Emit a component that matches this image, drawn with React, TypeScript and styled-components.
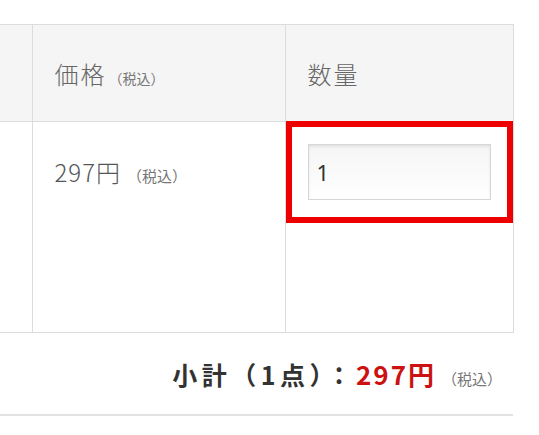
import React, { useState } from 'react';
import styled, { createGlobalStyle } from 'styled-components';

const GlobalStyle = createGlobalStyle`
    html, body {
        margin: 0;
        padding: 0;
        background: #fff;
    }
    body {
        font-family: "Noto Sans CJK JP", "Noto Sans", sans-serif;
        color: #555;
    }
`;

const Page = styled.div`
    width: 513px;
    padding-top: 24px;
`;

const Table = styled.table`
    width: 513px;
    border-collapse: collapse;
    table-layout: fixed;
`;

const HeadCell = styled.th<{ $edge?: boolean }>`
    box-sizing: border-box;
    height: 97px;
    padding: 0 22px;
    background: #f5f5f5;
    border: 1px solid #dcdcdc;
    border-left: ${(p) => (p.$edge ? 'none' : '1px solid #dcdcdc')};
    text-align: left;
    font-weight: 300;
    font-size: 24px;
    letter-spacing: 2px;
    color: #666;
    vertical-align: middle;
    white-space: nowrap;
`;

const Cell = styled.td<{ $edge?: boolean }>`
    position: relative;
    box-sizing: border-box;
    height: 211px;
    padding: 22px 22px;
    border: 1px solid #dcdcdc;
    border-left: ${(p) => (p.$edge ? 'none' : '1px solid #dcdcdc')};
    vertical-align: top;
`;

const Tax = styled.span<{ $size?: number }>`
    font-size: ${(p) => p.$size ?? 14}px;
    font-weight: 400;
    letter-spacing: 0;
    color: #777;
    margin-left: ${(p) => (p.$size ? 6 : 2)}px;
`;

const Price = styled.div`
    height: 56px;
    line-height: 56px;
    font-size: 24px;
    font-weight: 300;
    letter-spacing: 1px;
    color: #555;
`;

const QtyInput = styled.input`
    box-sizing: border-box;
    display: block;
    width: 183px;
    height: 56px;
    padding: 0 8px;
    border: 1px solid #d6d6d6;
    background: linear-gradient(#f5f5f5, #ffffff);
    box-shadow: inset 0 2px 3px rgba(0, 0, 0, 0.08);
    font-family: "Noto Sans", "Noto Sans CJK JP", sans-serif;
    font-size: 22px;
    color: #333;
    outline: none;
`;

const Highlight = styled.div`
    position: absolute;
    top: -1px;
    left: 0;
    width: 227px;
    height: 102px;
    box-sizing: border-box;
    border: 6px solid #ee0000;
    pointer-events: none;
`;

const Summary = styled.div`
    display: flex;
    align-items: baseline;
    justify-content: flex-end;
    height: 83px;
    padding: 22px 11px 0 0;
    box-sizing: border-box;
    border-bottom: 2px solid #e2e2e2;
`;

const SumLabel = styled.span`
    font-size: 25px;
    font-weight: 700;
    letter-spacing: 4.5px;
    color: #333;
`;

const SumPrice = styled.span`
    font-size: 26px;
    font-weight: 700;
    letter-spacing: 2px;
    color: #cc1111;
`;

function App() {
    const [qty, setQty] = useState('1');
    return (
        <>
            <GlobalStyle />
            <Page>
                <Table>
                    <colgroup>
                        <col style={{ width: 32 }} />
                        <col style={{ width: 253 }} />
                        <col style={{ width: 228 }} />
                    </colgroup>
                    <thead>
                        <tr>
                            <HeadCell $edge />
                            <HeadCell>
                                価格<Tax>（税込）</Tax>
                            </HeadCell>
                            <HeadCell>数量</HeadCell>
                        </tr>
                    </thead>
                    <tbody>
                        <tr>
                            <Cell $edge />
                            <Cell>
                                <Price>
                                    297円<Tax $size={15}>（税込）</Tax>
                                </Price>
                            </Cell>
                            <Cell>
                                <QtyInput value={qty} onChange={(e) => setQty(e.target.value)} />
                                <Highlight />
                            </Cell>
                        </tr>
                    </tbody>
                </Table>
                <Summary>
                    <SumLabel>小計（1点）：</SumLabel>
                    <SumPrice>297円</SumPrice>
                    <Tax $size={15}>（税込）</Tax>
                </Summary>
            </Page>
        </>
    );
}

export default App;
